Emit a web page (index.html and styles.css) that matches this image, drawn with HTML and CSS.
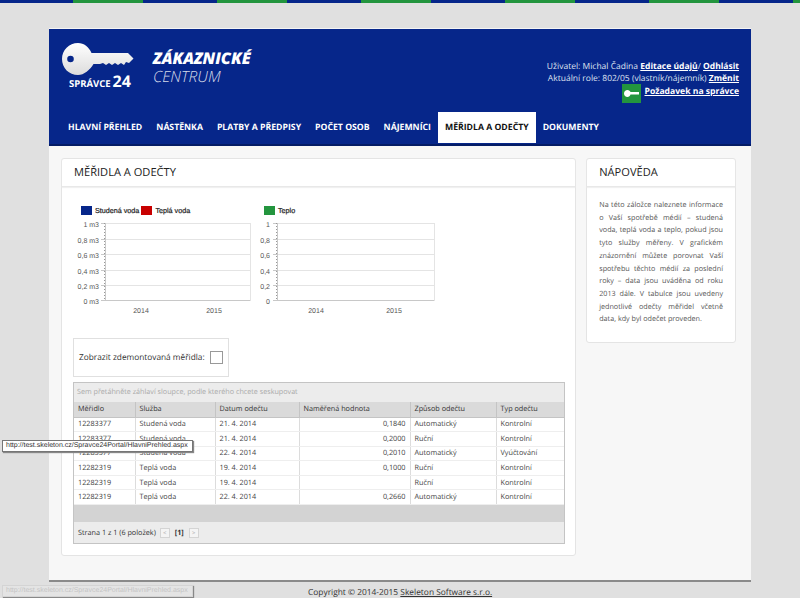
FILE: index.html
```html
<!DOCTYPE html>
<html lang="cs">
<head>
    <meta charset="UTF-8">
    <meta name="viewport" content="width=device-width, initial-scale=1.0">
    <title>Zákaznické centrum</title>
    <link rel="stylesheet" href="styles.css">
</head>

<body>
    <div class="stripes"></div>

    <div class="page">
        <div class="header">
            <div class="header-top">
                <div class="logo">
                    <svg class="logo-key" width="72" height="34" viewBox="0 0 72 34">
                        <defs>
                            <linearGradient id="keyFill" x1="0" y1="0" x2="0" y2="1">
                                <stop offset="0" stop-color="#ffffff"/>
                                <stop offset="1" stop-color="#dcdcdc"/>
                            </linearGradient>
                        </defs>
                        <path fill="url(#keyFill)" fill-rule="evenodd" d="M16 0C22 0 27 4 29.500 10H66L71.500 15.500L67 20L64 19L62 22L59 20L56 22L53 20L50 22L47 20L44 22L41 20L38 21H31.500C28 27 22 32 16 32C7 32 0 25 0 16C0 7 7 0 16 0ZM8.500 12.700A3.300 3.300 0 1 0 8.501 19.300A3.300 3.300 0 1 0 8.500 12.700Z"/>
                    </svg>
                    <div class="logo-name"><span class="logo-word">SPRÁVCE</span><span class="logo-num">24</span></div>
                </div>
                <div class="title">
                    <div class="title-main">ZÁKAZNICKÉ</div>
                    <div class="title-sub">CENTRUM</div>
                </div>
                <div class="user">
                    <div class="user-line">Uživatel: Michal Čadina <a href="#">Editace údajů</a>/ <a href="#">Odhlásit</a></div>
                    <div class="user-line">Aktuální role: 802/05 (vlastník/nájemník) <a href="#">Změnit</a></div>
                    <div class="user-request">
                        <span class="key-btn">
                            <svg width="15" height="7" viewBox="0 0 15 7"><path fill="#fff" d="M3.500 0C5 0 6 1 6.500 2H15V4.500H6.500C6 6 5 7 3.500 7C1.500 7 0 5.500 0 3.500C0 1.500 1.500 0 3.500 0Z"/></svg>
                        </span>
                        <a href="#">Požadavek na správce</a>
                    </div>
                </div>
            </div>
            <div class="nav">
                <a href="#">HLAVNÍ PŘEHLED</a>
                <a href="#">NÁSTĚNKA</a>
                <a href="#">PLATBY A PŘEDPISY</a>
                <a href="#">POČET OSOB</a>
                <a href="#">NÁJEMNÍCI</a>
                <a href="#" class="active">MĚŘIDLA A ODEČTY</a>
                <a href="#">DOKUMENTY</a>
            </div>
        </div>

        <div class="content">
            <div class="panel main-panel">
                <h2>MĚŘIDLA A ODEČTY</h2>
                <div class="charts">
                    <div class="chart chart-left">
                        <div class="legend">
                            <span class="swatch blue"></span><span>Studená voda</span>
                            <span class="swatch red"></span><span>Teplá voda</span>
                        </div>
                        <svg width="180" height="100" viewBox="0 0 180 100">
                            <path class="grid-line" d="M31 7.500H176M31 23.500H176M31 38.500H176M31 54.500H176M31 69.500H176M176.500 7V85"/>
                            <path class="axis" d="M27 7.500H31M27 23.500H31M27 38.500H31M27 54.500H31M27 69.500H31M27 84.500H176M31.500 7V85"/>
                            <path class="ticks" d="M30.500 7V85"/>
                            <g class="ylabels">
                                <text x="25" y="10.500">1 m3</text>
                                <text x="25" y="26.500">0,8 m3</text>
                                <text x="25" y="41.500">0,6 m3</text>
                                <text x="25" y="57.500">0,4 m3</text>
                                <text x="25" y="72.500">0,2 m3</text>
                                <text x="25" y="87.500">0 m3</text>
                            </g>
                            <text class="xlabel" x="67" y="97">2014</text>
                            <text class="xlabel" x="140" y="97">2015</text>
                        </svg>
                    </div>
                    <div class="chart">
                        <div class="legend">
                            <span class="swatch green"></span><span>Teplo</span>
                        </div>
                        <svg width="180" height="100" viewBox="0 0 180 100">
                            <path class="grid-line" d="M20 7.500H177M20 23.500H177M20 38.500H177M20 54.500H177M20 69.500H177M177.500 7V85"/>
                            <path class="axis" d="M16 7.500H20M16 23.500H20M16 38.500H20M16 54.500H20M16 69.500H20M16 84.500H177M20.500 7V85"/>
                            <path class="ticks" d="M19.500 7V85"/>
                            <g class="ylabels">
                                <text x="13" y="10.500">1</text>
                                <text x="13" y="26.500">0,8</text>
                                <text x="13" y="41.500">0,6</text>
                                <text x="13" y="57.500">0,4</text>
                                <text x="13" y="72.500">0,2</text>
                                <text x="13" y="87.500">0</text>
                            </g>
                            <text class="xlabel" x="59" y="97">2014</text>
                            <text class="xlabel" x="137" y="97">2015</text>
                        </svg>
                    </div>
                </div>

                <div class="filter">
                    <span>Zobrazit zdemontovaná měřidla:</span>
                    <span class="checkbox"></span>
                </div>

                <div class="grid-box">
                    <div class="group-bar">Sem přetáhněte záhlaví sloupce, podle kterého chcete seskupovat</div>
                    <table>
                        <tr><th class="c1">Měřidlo</th><th class="c2">Služba</th><th class="c3">Datum odečtu</th><th class="c4">Naměřená hodnota</th><th class="c5">Způsob odečtu</th><th class="c6">Typ odečtu</th></tr>
                        <tr><td>12283377</td><td>Studená voda</td><td>21. 4. 2014</td><td class="num">0,1840</td><td>Automatický</td><td>Kontrolní</td></tr>
                        <tr><td>12283377</td><td>Studená voda</td><td>21. 4. 2014</td><td class="num">0,2000</td><td>Ruční</td><td>Kontrolní</td></tr>
                        <tr><td>12283377</td><td>Studená voda</td><td>22. 4. 2014</td><td class="num">0,2010</td><td>Automatický</td><td>Vyúčtování</td></tr>
                        <tr><td>12282319</td><td>Teplá voda</td><td>19. 4. 2014</td><td class="num">0,1000</td><td>Ruční</td><td>Kontrolní</td></tr>
                        <tr><td>12282319</td><td>Teplá voda</td><td>19. 4. 2014</td><td class="num"></td><td>Ruční</td><td>Kontrolní</td></tr>
                        <tr><td>12282319</td><td>Teplá voda</td><td>22. 4. 2014</td><td class="num">0,2660</td><td>Automatický</td><td>Kontrolní</td></tr>
                    </table>
                    <div class="grid-band"></div>
                    <div class="pager">
                        <span>Strana 1 z 1 (6 položek)</span>
                        <span class="pager-btn">&lt;</span>
                        <b>[1]</b>
                        <span class="pager-btn">&gt;</span>
                    </div>
                </div>
            </div>

            <div class="panel side-panel">
                <h2>NÁPOVĚDA</h2>
                <p>Na této záložce naleznete informace o Vaší spotřebě médií – studená voda, teplá voda a teplo, pokud jsou tyto služby měřeny. V grafickém znázornění můžete porovnat Vaší spotřebu těchto médií za poslední roky – data jsou uváděna od roku 2013 dále. V tabulce jsou uvedeny jednotlivé odečty měřidel včetně data, kdy byl odečet proveden.</p>
            </div>
        </div>
    </div>

    <div class="footer">Copyright © 2014-2015 <a href="#">Skeleton Software s.r.o.</a></div>

    <div class="tooltip tooltip-top">http://test.skeleton.cz/Spravce24Portal/HlavniPrehled.aspx</div>
    <div class="tooltip tooltip-bottom">http://test.skeleton.cz/Spravce24Portal/HlavniPrehled.aspx</div>
</body>
</html>
```

FILE: styles.css
```css
html,
body {
    height: 598px;
    overflow: hidden;
}

body {
    margin: 0;
    background-color: #e0e0e0;
    font-family: "Open Sans", sans-serif;
    text-rendering: geometricPrecision;
    color: #333;
    position: relative;
}

a {
    color: inherit;
}

.stripes {
    height: 3px;
    background: repeating-linear-gradient(to right, #06268a 0, #06268a 73px, #23953e 73px, #23953e 143px, #06268a 143px, #06268a 144px);
}

.page {
    width: 702px;
    margin: 25px 0 0 49px;
    border-top: 1px solid #f4f4f4;
}

/* header */
.header {
    background-color: #06268a;
    height: 117px;
    box-sizing: border-box;
    border-bottom: 2px solid #041c66;
    color: #fff;
}

.header-top {
    display: flex;
    height: 83px;
}

.logo {
    width: 104px;
    padding: 14px 0 0 13px;
    box-sizing: border-box;
}

.logo-key {
    display: block;
}

.logo-name {
    display: flex;
    align-items: baseline;
    margin: -3px 0 0 7px;
    font-weight: 700;
    line-height: 14px;
}

.logo-word {
    font-size: 9.500px;
}

.logo-num {
    font-size: 16px;
    margin-left: 2px;
}

.title {
    padding-top: 20px;
    font-style: italic;
}

.title-main {
    font-size: 16px;
    font-weight: 800;
    line-height: 18px;
}

.title-sub {
    font-size: 15.500px;
    font-weight: 300;
    line-height: 18px;
    color: #d5d9e8;
}

.user {
    margin-left: auto;
    padding: 30px 12px 0 0;
    text-align: right;
    font-size: 8.500px;
    line-height: 12px;
    color: #dfe3f0;
}

.user-line:first-child {
    margin-top: 2px;
}

.user a {
    color: #fff;
    font-weight: 700;
}

.user-request {
    display: flex;
    justify-content: flex-end;
    gap: 3px;
    margin-top: -1px;
    font-size: 8.600px;
    line-height: 15px;
}

.key-btn {
    width: 19px;
    height: 19px;
    background-color: #23953e;
    display: flex;
    align-items: center;
    justify-content: center;
}

.nav {
    display: flex;
    align-items: stretch;
    height: 31px;
    padding-left: 12px;
}

.nav a {
    padding: 0 7px;
    font-size: 8.700px;
    font-weight: 700;
    line-height: 30px;
    text-decoration: none;
    color: #fff;
}

.nav a.active {
    background-color: #fff;
    color: #111;
}

/* content */
.content {
    display: flex;
    align-items: flex-start;
    gap: 10px;
    height: 436px;
    box-sizing: border-box;
    padding: 12px 15px 0 12px;
    background-color: #f7f7f7;
    border-bottom: 2px solid #8a8a8a;
}

.panel {
    background-color: #fff;
    border: 1px solid #e4e4e4;
    border-radius: 3px;
    box-sizing: border-box;
}

.panel h2 {
    margin: 0;
    height: 27px;
    padding-left: 12px;
    font-size: 11.100px;
    font-weight: 400;
    line-height: 28px;
    color: #222;
    border-bottom: 1px solid #e8e8e8;
    box-shadow: 0 1px 1px #f0f0f0;
}

.main-panel {
    width: 516px;
    height: 398px;
}

.side-panel {
    width: 150px;
    height: 185px;
}

.side-panel p {
    margin: 0;
    padding: 12px 12px 0;
    font-size: 7.200px;
    line-height: 12.700px;
    text-align: justify;
    color: #555;
}

/* charts */
.charts {
    display: flex;
    padding: 16px 0 0 12px;
}

.chart-left {
    width: 183px;
}

.chart svg {
    display: block;
    margin-top: -1px;
}

.legend {
    display: flex;
    align-items: center;
    height: 14px;
    margin-left: 7px;
    font-family: "Liberation Sans", sans-serif;
    font-size: 7.200px;
    -webkit-text-stroke: 0.2px #222;
    color: #222;
}

.swatch {
    width: 11px;
    height: 9px;
    margin: 0 3px 0 0;
}

.swatch.red {
    margin-left: 2px;
    background-color: #c80000;
}

.swatch.blue {
    background-color: #06268a;
}

.swatch.green {
    background-color: #23953e;
}

.grid-line {
    stroke: #e4e4e4;
    fill: none;
}

.axis {
    stroke: #c8c8c8;
    fill: none;
}

.ticks {
    stroke: #999;
    stroke-dasharray: 1 2;
    fill: none;
}

.ylabels text {
    font-family: "Liberation Sans", sans-serif;
    font-size: 7px;
    text-anchor: end;
    fill: #555;
}

.xlabel {
    font-family: "Liberation Sans", sans-serif;
    font-size: 7px;
    text-anchor: middle;
    fill: #555;
}

/* filter box */
.filter {
    display: flex;
    align-items: center;
    gap: 5px;
    width: 156px;
    height: 39px;
    box-sizing: border-box;
    margin: 22px 0 5px 11px;
    padding-left: 5px;
    border: 1px solid #e0e0e0;
    font-size: 8.300px;
    color: #333;
}

.checkbox {
    width: 13px;
    height: 13px;
    box-sizing: border-box;
    border: 1px solid #999;
    background-color: #fff;
}

/* data grid */
.grid-box {
    width: 492px;
    margin-left: 11px;
    box-sizing: border-box;
    border: 1px solid #c4c4c4;
    font-size: 7.250px;
}

.group-bar {
    height: 19px;
    padding-left: 3px;
    line-height: 18px;
    background-color: #ececec;
    color: #aaa;
    font-size: 7.200px;
}

table {
    width: 100%;
    table-layout: fixed;
    border-collapse: collapse;
}

th,
td {
    padding: 0 4px;
    height: 14.600px;
    box-sizing: border-box;
    font-weight: 400;
    text-align: left;
    white-space: nowrap;
    overflow: hidden;
    border-left: 1px solid #dcdcdc;
    border-bottom: 1px solid #eeeeee;
    color: #444;
}

th {
    height: 15px;
    background-color: #dadada;
    border-left-color: #c4c4c4;
    border-bottom: 1px solid #c4c4c4;
    color: #333;
}

th:first-child,
td:first-child {
    border-left: none;
}

.c1 { width: 61px; }
.c2 { width: 80px; }
.c3 { width: 84px; }
.c4 { width: 111px; }
.c5 { width: 86px; }

.num {
    text-align: right;
}

.grid-band {
    height: 17px;
    background-color: #d3d3d3;
}

.pager {
    display: flex;
    align-items: center;
    gap: 4px;
    height: 21px;
    padding-left: 4px;
    background-color: #ececec;
}

.pager b {
    margin: 0 1px;
}

.pager-btn {
    width: 8px;
    height: 8px;
    border: 1px solid #d4d4d4;
    background-color: #f4f4f4;
    color: #aaa;
    font-size: 6px;
    line-height: 8px;
    text-align: center;
}

/* footer */
.footer {
    padding-left: 308px;
    font-size: 8.400px;
    line-height: 14px;
    margin-top: 4px;
    color: #333;
}

/* browser link tooltips over the page */
.tooltip {
    position: absolute;
    left: 2px;
    width: 186px;
    height: 10px;
    padding-left: 3px;
    background-color: #fff;
    border: 1px solid #767676;
    box-shadow: 1px 1px 1px #888;
    font-family: "Liberation Sans", sans-serif;
    font-size: 7px;
    line-height: 10px;
    color: #333;
    white-space: nowrap;
}

.tooltip-top {
    top: 440px;
}

.tooltip-bottom {
    top: 585px;
    background-color: #e4e4e4;
    border-color: #d4d4d4;
    color: #c4c4c4;
}
```
